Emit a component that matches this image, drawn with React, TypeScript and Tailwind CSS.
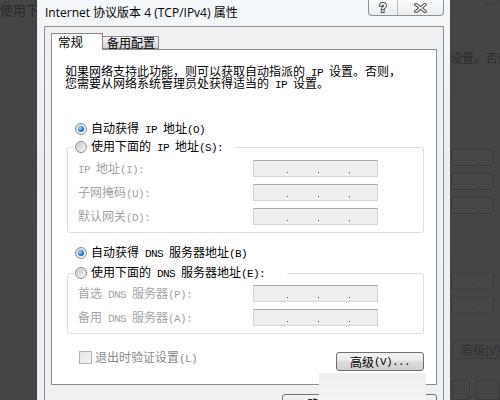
import React from 'react';

// SimSun-like text: ascii runs are half width (6px), cjk full width (12px)
const Txt: React.FC<{ s: string }> = ({ s }) => (
  <>
    {s.split(/([\x20-\x7e]+)/).map((part, i) =>
      /^[\x20-\x7e]+$/.test(part) ? (
        <span key={i} className="font-['Liberation_Mono',monospace] text-[11px] tracking-[-0.6px] whitespace-pre">
          {part}
        </span>
      ) : (
        <React.Fragment key={i}>{part}</React.Fragment>
      )
    )}
  </>
);

const Radio: React.FC<{ checked?: boolean }> = ({ checked }) => (
  <span className="w-[12px] h-[12px] rounded-full border border-[#8c8e8e] bg-[linear-gradient(135deg,#d6d6d6,#f8f8f8)] flex items-center justify-center shrink-0">
    {checked ? (
      <span className="w-[6px] h-[6px] rounded-full bg-[radial-gradient(circle_at_35%_35%,#9ad8ff,#1d6fc2_60%,#0b3d78)]" />
    ) : (
      <span className="w-[8px] h-[8px] rounded-full bg-[linear-gradient(135deg,#c9c9c9,#f4f4f4)]" />
    )}
  </span>
);

const IpBox: React.FC = () => (
  <div className="w-[125px] h-[17px] border border-[#d6d6d6] border-t-[#a9a9a9] bg-[#efefef] flex items-end pb-[3px] pl-[33px] gap-[30px]">
    <span className="w-px h-px bg-[#555]" />
    <span className="w-px h-px bg-[#555]" />
    <span className="w-px h-px bg-[#555]" />
  </div>
);

const Field: React.FC<{ label: string }> = ({ label }) => (
  <div className="flex items-center h-[17px]">
    <div className="w-[175px] leading-[14px] text-[#a3a3a3] whitespace-nowrap">
      <Txt s={label} />
    </div>
    <IpBox />
  </div>
);

const GhostBox: React.FC = () => (
  <div className="w-[43px] h-[17px] ml-px border border-[#3b3b3b] bg-[#474747] flex items-end justify-center pb-[4px]">
    <span className="w-px h-px bg-[#2f2f2f]" />
  </div>
);

export default function App() {
  return (
    <div className="relative w-[500px] h-[400px] overflow-hidden flex bg-[#454545] font-['Noto_Sans_CJK_SC',sans-serif] text-[12px] leading-[14px] text-black">
      {/* window behind, left */}
      <div className="w-[37px] shrink-0 overflow-hidden pt-[3px]">
        <div className="text-[13px] leading-[13px] text-[#2a2a2a] whitespace-nowrap">使用下</div>
      </div>

      {/* dialog window */}
      <div className="w-[413px] shrink-0 flex flex-col border-l border-[#e4e9ed] bg-[linear-gradient(180deg,#f5f8fa,#e9eef2_40%,#eef1f4)]">
        <div className="h-[26px] flex items-start shrink-0">
          <div className="pl-[7px] pt-[5px] font-['Open_Sans','Noto_Sans_CJK_SC',sans-serif] text-[12px] leading-[16px] whitespace-nowrap">
            Internet 协议版本 4 (TCP/IPv4) 属性
          </div>
          <div className="ml-auto mr-[6px] flex h-[16px] border border-t-0 border-[#8d9196] rounded-b-[4px] bg-[linear-gradient(180deg,#fbfcfd,#e8ecef)] overflow-hidden">
            <div className="w-[29px] flex items-center justify-center border-r border-[#b6babe]">
              <span className="text-[12px] leading-[12px] font-bold text-white [-webkit-text-stroke:2px_#4a4a4a] [paint-order:stroke_fill] font-['Liberation_Sans',sans-serif]">
                ?
              </span>
            </div>
            <div className="w-[45px] flex items-center justify-center">
              <svg width="13" height="10" viewBox="0 0 13 10">
                <path d="M2 1.5 L11 8.5 M11 1.5 L2 8.5" stroke="#4a4a4a" strokeWidth="3.4" strokeLinecap="square" />
                <path d="M2 1.5 L11 8.5 M11 1.5 L2 8.5" stroke="#ffffff" strokeWidth="1.4" strokeLinecap="square" />
              </svg>
            </div>
          </div>
        </div>

        <div className="flex-1 flex px-[6px]">
          <div className="flex-1 flex flex-col border-l border-t border-r border-[#8b8e92] bg-[#f0f0f0] px-[6px] pt-[6px]">
            {/* tabs */}
            <div className="flex items-end h-[16px] relative z-10">
              <div className="w-[52px] h-[17px] -mb-px border border-b-0 border-[#898c95] bg-white pl-[6px] pt-[1px] text-[12.5px] leading-[14px]">
                常规
              </div>
              <div className="w-[57px] h-[13px] -ml-px border border-[#898c95] bg-[linear-gradient(180deg,#f3f3f3,#e3e3e3_50%,#d5d5d5)] pl-[4px] text-[12px] leading-[12px]">
                备用配置
              </div>
            </div>

            {/* tab page */}
            <div className="h-[336px] border border-[#898c95] bg-white pl-[13px] pr-[12px] flex flex-col">
              <div className="mt-[15px] whitespace-nowrap">
                <div className="h-[12px] leading-[12px]">
                  <Txt s="如果网络支持此功能，则可以获取自动指派的 IP 设置。否则，" />
                </div>
                <div className="h-[12px] leading-[12px]">
                  <Txt s="您需要从网络系统管理员处获得适当的 IP 设置。" />
                </div>
              </div>

              <div className="mt-[33px] pl-[10px] h-[14px] flex items-center gap-[4px] whitespace-nowrap">
                <Radio checked />
                <span className="leading-[14px]">
                  <Txt s="自动获得 IP 地址(O)" />
                </span>
              </div>

              <fieldset className="mt-[4px] ml-[2px] border border-[#d5dfe5] rounded-[3px]">
                <legend className="ml-[6px] pl-[1px] pr-[12px] h-[14px] flex items-center gap-[4px] whitespace-nowrap">
                  <Radio />
                  <span className="leading-[14px]">
                    <Txt s="使用下面的 IP 地址(S):" />
                  </span>
                </legend>
                <div className="pl-[10px] pt-[6px] pb-[7px] flex flex-col gap-[7px]">
                  <Field label="IP 地址(I):" />
                  <Field label="子网掩码(U):" />
                  <Field label="默认网关(D):" />
                </div>
              </fieldset>

              <div className="mt-[13px] pl-[10px] h-[14px] flex items-center gap-[4px] whitespace-nowrap">
                <Radio checked />
                <span className="leading-[14px]">
                  <Txt s="自动获得 DNS 服务器地址(B)" />
                </span>
              </div>

              <fieldset className="mt-[6px] ml-[2px] border border-[#d5dfe5] rounded-[3px]">
                <legend className="ml-[6px] pl-[1px] pr-[22px] h-[14px] flex items-center gap-[4px] whitespace-nowrap">
                  <Radio />
                  <span className="leading-[14px]">
                    <Txt s="使用下面的 DNS 服务器地址(E):" />
                  </span>
                </legend>
                <div className="pl-[10px] pt-[5px] pb-[7px] flex flex-col gap-[7px]">
                  <Field label="首选 DNS 服务器(P):" />
                  <Field label="备用 DNS 服务器(A):" />
                </div>
              </fieldset>

              <div className="mt-[17px] flex items-start">
                <div className="pl-[14px] flex items-center gap-[3px] h-[13px] whitespace-nowrap">
                  <span className="w-[13px] h-[13px] border border-[#b1b1b1] bg-[linear-gradient(135deg,#e2e2e2,#f7f7f7)] shrink-0" />
                  <span className="leading-[14px] text-[#8a8a8a]">
                    <Txt s="退出时验证设置(L)" />
                  </span>
                </div>
                <button className="ml-auto mt-px w-[88px] h-[19px] border border-[#707070] rounded-[3px] bg-[linear-gradient(180deg,#f2f2f2,#ebebeb_45%,#dddddd_50%,#cfcfcf)] flex items-center justify-center whitespace-nowrap leading-[14px]">
                  <Txt s="高级(V)..." />
                </button>
              </div>
            </div>

            {/* dialog buttons */}
            <div className="mt-[9px] flex justify-end gap-[5px]">
              <button className="w-[75px] h-[23px] border border-[#707070] rounded-[3px] bg-[linear-gradient(180deg,#f2f2f2,#ebebeb_45%,#dddddd_50%,#cfcfcf)] flex items-start justify-center pt-[2px]">
                确定
              </button>
              <button className="w-[75px] h-[23px] border border-[#707070] rounded-[3px] bg-[linear-gradient(180deg,#f2f2f2,#ebebeb_45%,#dddddd_50%,#cfcfcf)] flex items-start justify-center pt-[2px]">
                取消
              </button>
            </div>
          </div>
        </div>
      </div>

      {/* window behind, right (dimmed) */}
      <div className="w-[50px] shrink-0 flex flex-col overflow-hidden">
        <div className="ml-auto w-[17px] h-[7px] border border-t-0 border-[#3a3a3a] rounded-b-[3px]" />
        <div className="mt-[48px] text-[12px] leading-[12px] text-[#2c2c2c] whitespace-nowrap">设置。否则</div>
        <div className="mt-[85px] flex flex-col gap-[7px]">
          <GhostBox />
          <GhostBox />
          <GhostBox />
        </div>
        <div className="mt-[59px] flex flex-col gap-[7px]">
          <GhostBox />
          <GhostBox />
        </div>
        <div className="mt-[26px] ml-[2px] w-[60px] h-[19px] border border-[#3a3a3a] rounded-[3px] pl-[8px] text-[#2e2e2e] whitespace-nowrap leading-[17px]">
          高级(V)
        </div>
        <div className="mt-[21px] ml-[2px] flex gap-[6px]">
          <div className="w-[22px] h-[20px] border border-[#3a3a3a] rounded-[3px]" />
          <div className="w-[30px] h-[20px] border border-[#3a3a3a] rounded-[3px]" />
        </div>
      </div>

      {/* light patch over the bottom buttons */}
      <div className="absolute left-[319px] top-[373px] w-[107px] h-[27px] bg-[linear-gradient(180deg,#efefef,#f4f4f4)]" />
    </div>
  );
}
